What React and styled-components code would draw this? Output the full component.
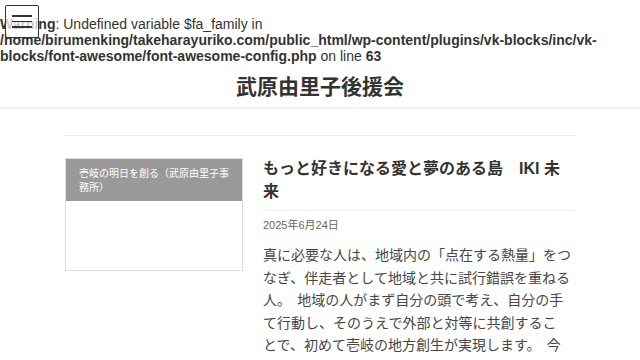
import React from "react";
import styled, { createGlobalStyle } from "styled-components";

const Global = createGlobalStyle`
  html, body { margin: 0; padding: 0; background: #fff; }
  body { font-family: "Liberation Sans", "Noto Sans CJK JP", sans-serif; color: #333; }
`;

const MenuButton = styled.button`
  position: fixed;
  top: 5px;
  left: 5px;
  width: 34px;
  height: 33px;
  box-sizing: border-box;
  border: 1px solid #333;
  border-radius: 2px;
  background: rgba(255, 255, 255, 0.75);
  display: flex;
  flex-direction: column;
  align-items: center;
  justify-content: center;
  gap: 4px;
  padding: 0;
  z-index: 10;
`;

const Bar = styled.span`
  display: block;
  width: 20px;
  height: 1.5px;
  background: #333;
`;

const WarningBox = styled.div`
  font-family: "Liberation Sans", sans-serif;
  font-size: 14px;
  line-height: 16px;
  color: #333;
  padding-top: 16px;
  b { font-weight: bold; }
`;

const Header = styled.header`
  height: 43px;
  display: flex;
  align-items: center;
  justify-content: center;
  box-shadow: 0 1px 3px rgba(0, 0, 0, 0.06);
  border-bottom: 1px solid #f3f3f3;
`;

const SiteTitle = styled.h1`
  margin: 0;
  font-size: 21px;
  line-height: 1;
  font-weight: bold;
  color: #333;
  font-family: "Noto Sans CJK JP", sans-serif;
`;

const Main = styled.main`
  width: 510px;
  margin: 0 auto;
  padding-top: 27px;
`;

const Divider = styled.div`
  border-top: 1px solid #eaeaea;
  padding-top: 22px;
`;

const Post = styled.article`
  display: grid;
  grid-template-columns: 178px 312px;
  column-gap: 20px;
  align-items: start;
`;

const Card = styled.div`
  border: 1px solid #ddd;
  height: 113px;
  box-sizing: border-box;
`;

const CardHead = styled.div`
  background: #999;
  color: #fff;
  font-size: 10px;
  line-height: 14px;
  padding: 7px 12px 6px 13px;
  height: 42px;
  box-sizing: border-box;
  font-family: "Noto Sans CJK JP", sans-serif;
`;

const Body = styled.div`
  display: flex;
  flex-direction: column;
`;

const PostTitle = styled.h2`
  margin: 0;
  font-size: 16px;
  line-height: 22.5px;
  font-weight: bold;
  color: #333;
  padding-bottom: 7px;
  border-bottom: 1px solid #eee;
  font-family: "Liberation Sans", "Noto Sans CJK JP", sans-serif;
`;

const DateLine = styled.div`
  font-size: 11px;
  line-height: 14px;
  color: #666;
  padding-top: 7px;
  font-family: "Liberation Sans", "Noto Sans CJK JP", sans-serif;
`;

const Excerpt = styled.p`
  margin: 11px 0 0;
  font-size: 14px;
  line-height: 22.5px;
  color: #464646;
  word-spacing: 3px;
  font-family: "Noto Sans CJK JP", sans-serif;
`;

const ExcerptLine = styled.span`
  display: block;
  white-space: nowrap;
`;

const excerptLines = [
  "真に必要な人は、地域内の「点在する熱量」をつ",
  "なぎ、伴走者として地域と共に試行錯誤を重ねる",
  "人。 地域の人がまず自分の頭で考え、自分の手",
  "て行動し、そのうえで外部と対等に共創するこ",
  "とで、初めて壱岐の地方創生が実現します。 今",
];

export default function App() {
  return (
    <>
      <Global />
      <MenuButton aria-label="menu">
        <Bar />
        <Bar />
        <Bar />
      </MenuButton>
      <WarningBox>
        <b>Warning</b>: Undefined variable $fa_family in{" "}
        <b>/home/birumenking/takeharayuriko.com/public_html/wp-content/plugins/vk-blocks/inc/vk-blocks/font-awesome/font-awesome-config.php</b>{" "}
        on line <b>63</b>
      </WarningBox>
      <Header>
        <SiteTitle>武原由里子後援会</SiteTitle>
      </Header>
      <Main>
        <Divider>
          <Post>
            <Card>
              <CardHead>壱岐の明日を創る（武原由里子事務所）</CardHead>
            </Card>
            <Body>
              <PostTitle>もっと好きになる愛と夢のある島　IKI 未来</PostTitle>
              <DateLine>2025年6月24日</DateLine>
              <Excerpt>
                {excerptLines.map((l, i) => (
                  <ExcerptLine key={i}>{l}</ExcerptLine>
                ))}
              </Excerpt>
            </Body>
          </Post>
        </Divider>
      </Main>
    </>
  );
}
